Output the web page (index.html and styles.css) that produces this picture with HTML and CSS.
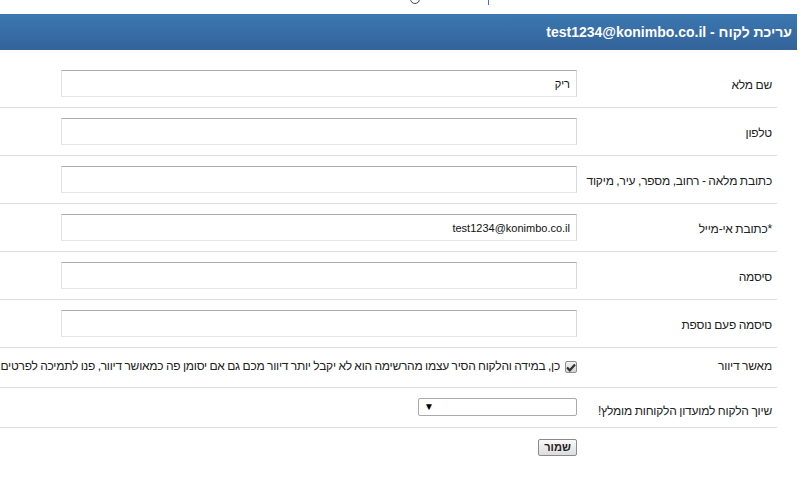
FILE: index.html
```html
<!DOCTYPE html>
<html lang="he" dir="rtl">
<head>
<meta charset="utf-8">
<title>עריכת לקוח</title>
<link rel="stylesheet" href="styles.css">
</head>
<body>
<div class="topbar">
  <span class="top-line"></span>
  <span class="top-circle"></span>
</div>
<div class="header">עריכת לקוח - test1234@konimbo.co.il</div>
<form class="form">
  <div class="row">
    <div class="label">שם מלא</div>
    <div class="field"><input class="text" type="text" value="ריק"></div>
  </div>
  <div class="row">
    <div class="label">טלפון</div>
    <div class="field"><input class="text" type="text" value=""></div>
  </div>
  <div class="row">
    <div class="label">כתובת מלאה - רחוב, מספר, עיר, מיקוד</div>
    <div class="field"><input class="text" type="text" value=""></div>
  </div>
  <div class="row">
    <div class="label">*כתובת אי-מייל</div>
    <div class="field"><input class="text" type="text" value="test1234@konimbo.co.il"></div>
  </div>
  <div class="row">
    <div class="label">סיסמה</div>
    <div class="field"><input class="text" type="text" value=""></div>
  </div>
  <div class="row">
    <div class="label">סיסמה פעם נוספת</div>
    <div class="field"><input class="text" type="text" value=""></div>
  </div>
  <div class="row row-check">
    <div class="label">מאשר דיוור</div>
    <div class="field field-check">
      <span class="checkbox"><svg width="10" height="9" viewBox="0 0 10 9"><path d="M1 4.5 L3.8 7.3 L9 1.5" fill="none" stroke="#333" stroke-width="2.2"/></svg></span>
      <span class="check-text">כן, במידה והלקוח הסיר עצמו מהרשימה הוא לא יקבל יותר דיוור מכם גם אם יסומן פה כמאושר דיוור, פנו לתמיכה לפרטים</span>
    </div>
  </div>
  <div class="row row-select">
    <div class="label">שיוך הלקוח למועדון הלקוחות מומלץ!</div>
    <div class="field"><div class="select"><span class="arrow">▼</span></div></div>
  </div>
  <div class="row row-button">
    <div class="label"></div>
    <div class="field"><button class="btn" type="button">שמור</button></div>
  </div>
</form>
</body>
</html>
```
FILE: styles.css
```css
html, body {
  margin: 0;
  padding: 0;
  background: #fff;
}
body {
  direction: rtl;
  font-family: "Liberation Sans", Arial, sans-serif;
  font-size: 12px;
  color: #333;
  overflow: hidden;
}
.topbar {
  height: 14px;
  display: flex;
  align-items: flex-start;
  padding-right: 312px;
  gap: 68px;
  overflow: hidden;
}
.top-line {
  width: 1px;
  height: 5px;
  background: #3b6fd4;
}
.top-circle {
  width: 8px;
  height: 8px;
  border: 1px solid #444;
  border-radius: 50%;
  margin-top: -6px;
}
.header {
  margin-right: 4px;
  height: 36px;
  line-height: 36px;
  padding-right: 5px;
  background: linear-gradient(#3b78b1, #34629a);
  color: #fff;
  font-weight: bold;
  font-size: 14px;
}
.form {
  margin: 10px 24px 0 0;
  width: 777px;
}
.row {
  display: flex;
  align-items: center;
  border-bottom: 1px solid #ddd;
  padding: 10px 0;
}
.label {
  box-sizing: border-box;
  width: 194px;
  flex: none;
  padding-right: 5px;
  padding-top: 2px;
  line-height: 14px;
  white-space: nowrap;
  letter-spacing: -0.2px;
  word-spacing: -0.5px;
  color: #222;
}
.field {
  flex: 1;
  padding-right: 6px;
  display: flex;
}
.text {
  box-sizing: border-box;
  width: 516px;
  height: 27px;
  margin: 0;
  padding: 0 6px;
  border: 1px solid;
  border-color: #abadb3 #d5d8dd #e3e6ea #dfe2e6;
  font-family: "Liberation Sans", Arial, sans-serif;
  font-size: 11px;
  color: #111;
  direction: rtl;
  text-align: right;
  outline: none;
}
.row-check {
  align-items: flex-start;
  height: 40px;
  box-sizing: border-box;
  padding: 11px 0 0;
}
.row-check .label {
  padding-top: 0;
}
.field-check {
  align-items: flex-start;
  gap: 5px;
}
.checkbox {
  box-sizing: border-box;
  flex: none;
  width: 12px;
  height: 12px;
  margin-top: 2px;
  border: 1px solid #8f8f8f;
  border-radius: 2px;
  background: linear-gradient(#f2f2f2, #d4d4d4);
  display: flex;
  align-items: center;
  justify-content: center;
}
.check-text {
  white-space: nowrap;
  line-height: 14px;
  letter-spacing: -0.25px;
  word-spacing: -0.5px;
  color: #222;
}
.row-select {
  align-items: flex-start;
  height: 40px;
  box-sizing: border-box;
  padding: 10px 0 0;
}
.row-select .label {
  padding-top: 6px;
}
.select {
  box-sizing: border-box;
  width: 159px;
  height: 18px;
  border: 1px solid #a9a9a9;
  border-radius: 2px;
  background: #fff;
  display: flex;
  align-items: center;
  justify-content: flex-end;
  padding-left: 5px;
}
.arrow {
  font-size: 10px;
  color: #000;
  line-height: 1;
}
.row-button {
  border-bottom: none;
  padding: 11px 0 0;
}
.btn {
  box-sizing: border-box;
  width: 39px;
  height: 17px;
  margin: 0;
  padding: 0;
  border: 1px solid #8a8a8a;
  border-radius: 2px;
  background: linear-gradient(#fafafa, #dcdcdc);
  font-family: "Liberation Sans", Arial, sans-serif;
  font-size: 11px;
  font-weight: bold;
  color: #222;
  line-height: 15px;
}
```
